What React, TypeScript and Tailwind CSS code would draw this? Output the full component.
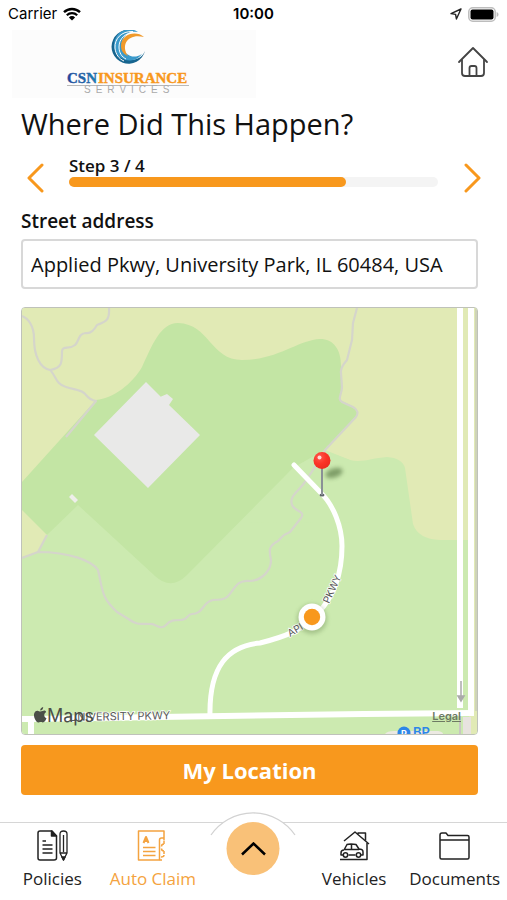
import React, { useState } from 'react';

const ORANGE = '#f8981d';

const StatusBar: React.FC = () => (
  <div className="grid grid-cols-3 items-center h-7 px-2 text-black font-['Inter','Liberation_Sans',sans-serif]">
    <div className="flex items-center gap-1.5 text-[15px]">
      <span>Carrier</span>
      <svg viewBox="0 0 18 14" className="w-[18px] h-3.5" aria-hidden="true">
        <path d="M1 5.2a11.5 11.5 0 0 1 16 0" fill="none" stroke="#000" strokeWidth="2.4" />
        <path d="M3.8 8.2a7.5 7.5 0 0 1 10.4 0" fill="none" stroke="#000" strokeWidth="2.2" />
        <path d="M9 13.6 5.9 10.4a4.4 4.4 0 0 1 6.2 0z" />
      </svg>
    </div>
    <span className="text-center text-[15px] font-semibold">10:00</span>
    <div className="flex items-center justify-end gap-1.5">
      <svg viewBox="0 0 12 12" className="w-3 h-3" aria-hidden="true">
        <path d="M11 1 1 5.6l4.6.8L6.4 11z" fill="none" stroke="#222" strokeWidth="1.4" strokeLinejoin="round" />
      </svg>
      <svg viewBox="0 0 31 15" className="w-[31px] h-[15px]" aria-hidden="true">
        <rect x="0.8" y="0.8" width="26.4" height="13.4" rx="4" fill="#fff" stroke="#bdbdbd" strokeWidth="1.5" />
        <rect x="2.5" y="2.5" width="23" height="10" rx="2" />
        <path d="M28.6 5v5c1.2-.4 1.9-1.4 1.9-2.5s-.7-2.1-1.9-2.5z" fill="#bdbdbd" />
      </svg>
    </div>
  </div>
);

const Logo: React.FC = () => (
  <svg viewBox="0 0 244 68" className="w-[244px] h-[68px] bg-[#fcfcfc]" role="img" aria-label="CSN Insurance Services">
    <defs>
      <linearGradient id="csn" x1="0" x2="1">
        <stop offset="0" stopColor="#26409a" />
        <stop offset="1" stopColor="#1687b5" />
      </linearGradient>
    </defs>
    <path d="M125 2A17 17 0 1 0 133 21A14.500 14.500 0 1 1 125 2Z" fill="#17658f" />
    <path d="M126 2A15.500 15.500 0 1 0 130 24A12.500 12.500 0 1 1 126 2Z" fill="#3a9acb" />
    <path d="M121 1.500C109 1 102.500 9 103 18C103.500 24 107 29 112 31" fill="none" stroke="#fcfcfc" strokeWidth="1" />
    <path d="M124 2.500C113 2 107 9 107 17C107 23 110 27 114 29" fill="none" stroke="#fcfcfc" strokeWidth="1" />
    <path d="M132 7C124 0 109 4 109 16C109 21 112 24.500 116 26C108 14 117 3 132 7Z" fill="#f09a2c" />
    <g fontFamily="'Liberation Serif', serif" fontWeight="700" fontSize="15">
      <text x="55" y="53" fill="url(#csn)" stroke="#2360a5" strokeWidth="0.4">CSN</text>
      <text x="86" y="53" fill={ORANGE} stroke={ORANGE} strokeWidth="0.4">INSURANCE</text>
    </g>
    <path d="M55 55.500h122" stroke="#b9b9b9" />
    <text x="72" y="63" fontFamily="'Liberation Sans', sans-serif" fontSize="10" letterSpacing="5" fill="#aaa">SERVICES</text>
  </svg>
);

const MapView: React.FC = () => (
  <svg viewBox="0 0 455 426" className="block w-full h-auto" role="img" aria-label="Map of Applied Pkwy">
    <defs>
      <filter id="soft" x="-50%" y="-50%" width="200%" height="200%">
        <feGaussianBlur stdDeviation="2.2" />
      </filter>
      <radialGradient id="pinHead" cx="0.35" cy="0.3" r="0.8">
        <stop offset="0" stopColor="#ff5a4e" />
        <stop offset="0.5" stopColor="#fb3427" />
        <stop offset="1" stopColor="#e92a20" />
      </radialGradient>
    </defs>

    {/* Land */}
    <rect width="455" height="426" fill="#cceab0" />
    <path
      d="M0 0H455V426H447V232H418Q396 231 391 216L383 160Q380 150 365 149C350 150 340 155 328 152L306 144L240 120L60 185L25 227L16 244L0 249Z"
      fill="#e1eab5"
    />
    <path
      d="M0 174L74 92C92 90 110 76 120 59C130 38 138 15 156 15C188 16 188 52 220 52C256 52 276 32 298 31C312 31 320 42 319 62L320 79L318 92L332 99L336 106L303 142L271 160L165 267Q149 283 133 268L56 197L25 227L0 202Z"
      fill="#c3e5a4"
    />
    <path d="M303 142L328 152L330 215L220 214L271 160Z" fill="#cceab0" />
    <path d="M124 74L142 92 138 89 145 86 151 91 147 97 178 127 126 180 72 127Z" fill="#e9e9e8" />
    <path d="M50 186L56 192 53 195 47 189Z" fill="#eeeeea" />

    {/* Trails */}
    <g fill="none" stroke="#d5d5cb" strokeWidth="2.2" strokeLinejoin="round">
      <path d="M0 8C6 10 12 18 12 30C12 48 18 60 28 62C33 66 34 77 44 79C52 82 60 81 64 87Q68 92 74 93L44 129" />
      <path d="M87 0C88 14 82 14 75 17Q70 26 64 25C56 25 57 34 53 37C47 42 41 37 40 43C40 55 40 60 28 62" />
      <path d="M335 0L331 15 330 32 325 52Q318 60 319 65L320 79C320 86 315 91 320 94L331 99Q338 103 334 109L303 142 291 162 283 174C276 184 267 188 270 197C273 204 284 203 279 210L268 224C260 227 260 229 256 233C246 238 247 243 249 252C249 262 241 272 228 273C214 271 212 283 205 289C199 294 194 290 188 293C181 296 180 306 170 306C165 306 166 312 159 312C152 312 148 312 144 317C138 323 134 315 128 316C120 315 116 318 108 312L95 304C79 289 81 283 76 262C70 253 48 244 16 244L0 250" />
      <path d="M16 244L25 227" />
    </g>
    <path d="M454 0V403" stroke="#cfd3b8" strokeWidth="2" />

    {/* Roads */}
    <g fill="none" stroke="#fff" strokeWidth="6">
      <path d="M438 0V400" />
      <path d="M449 0V408" />
      <path d="M0 411L8 411Q230 407 452 405" />
      <path d="M9 411V426" />
      <path d="M188 408C187 358 206 338 238 335C262 329 282 322 296 305C314 286 320 262 320 238C320 220 312 197 298 184L272 157" strokeWidth="5" strokeLinecap="round" />
    </g>
    <path d="M438 408V426" stroke="#c8c5c2" strokeWidth="2" />
    <path d="M441 409H449V426H441Z" fill="#e8e3df" />
    <path d="M439 373V391M436 388L439 393 442 388Z" fill="#aaa" stroke="#aaa" strokeWidth="1.5" />

    {/* Road names */}
    <g fontFamily="Inter, 'Liberation Sans', sans-serif" fill="#595959" fontSize="10" stroke="#fff" strokeWidth="1.5" paintOrder="stroke">
      <text x="47" y="413" fontSize="11" transform="rotate(-1 47 413)">UNIVERSITY PKWY</text>
      <text x="268" y="329" transform="rotate(-30 268 329)">API</text>
      <text x="307" y="296" transform="rotate(-65 307 296)">PKWY</text>
    </g>

    {/* Gas station */}
    <path d="M363 426Q365 423 372 423H416Q421 424 421 426Z" fill="#ece9e2" />
    <circle cx="382" cy="425" r="6.5" fill="#2d86e8" />
    <text x="379" y="429" fontFamily="Inter, sans-serif" fontSize="9" fontWeight="700" fill="#fff">P</text>
    <text x="391" y="429" fontFamily="Inter, sans-serif" fontSize="13" fontWeight="600" fill="#2d86e8">BP</text>

    {/* Apple Maps mark */}
    <g fill="#4b4f48" transform="translate(11 399)">
      <path d="M9.5 4C11 3.2 12.3 3.3 13.2 4.9 10.4 6.700 10.700 9.900 13.500 11.300 12.500 14 11.200 15.500 9.700 15.400 8.500 15 7.500 14.800 6.300 15.300 4.500 16.200 2.900 14 1.900 12 .1 8 1 4 4.400 3.700 5.500 3.600 6.400 4.500 7.300 4.500 8 4.500 8.700 4.300 9.500 4Z" />
      <path d="M7.200 3.500C7.100 1.700 8.400.2 10.200 0 10.400 1.900 9 3.500 7.200 3.500Z" />
    </g>
    <text x="25" y="414" fontFamily="Inter, 'Liberation Sans', sans-serif" fontSize="18" fill="#4b4f48">Maps</text>

    {/* Current location */}
    <circle cx="290" cy="311" r="15" fill="#5d7a45" opacity="0.35" filter="url(#soft)" />
    <circle cx="290" cy="309" r="13.5" fill="#fff" />
    <circle cx="290" cy="309" r="8.2" fill={ORANGE} />

    {/* Dropped pin */}
    <ellipse cx="312" cy="165" rx="9" ry="4.5" fill="#4b6b38" opacity="0.6" filter="url(#soft)" transform="rotate(-18 312 165)" />
    <ellipse cx="300" cy="187" rx="2.5" ry="1.5" fill="#60666b" />
    <path d="M300 160V187" stroke="#8a9096" strokeWidth="2" />
    <circle cx="300" cy="152.5" r="8.5" fill="url(#pinHead)" />
    <circle cx="297.5" cy="149.5" r="2" fill="#ffd9d5" />
  </svg>
);

const PoliciesIcon = () => (
  <>
    <path d="M15 1H3Q1 1 1 3V28Q1 30 3 30H17Q19.500 30 19.500 28V6Z" />
    <path d="M14.500 1V6H19.500Z" fill="currentColor" />
    <path d="M5.500 11H9M5.500 15H15.500M5.500 19H15.500M5.500 23H15.500" />
    <path d="M23 23V4Q23 1 26.500 1T30 4V23L26.500 30ZM23 23H30M26.500 5V22" strokeWidth="1.3" />
    <path d="M25 27H28L26.500 30Z" fill="currentColor" />
  </>
);

const ClaimIcon = () => (
  <>
    <path d="M27 8V1H1.500V30H22.500V10Q22.500 8 24.500 8H27V10.500" />
    <path d="M27 14Q24.500 14 24.500 16.500M27 14V11M27 21Q24.500 21 24.500 18.500M27 21V24M24 27Q27 27 27 25M22.500 30H25" />
    <path d="M6.500 13L9 7 11.500 13M7.500 11H10.500" strokeWidth="2" />
    <path d="M6 17.500H18.500M6 21.500H18.500M6 25.500H18.500" />
  </>
);

const VehiclesIcon = () => (
  <>
    <path d="M5 11L16 2 30 14" />
    <path d="M19 4V3H26.500V10.500M28 13V29.500H1" />
    <path d="M5 20L8 14.500Q9 14 12 14T17 14.500L20 19Q24 19 24 22V25H22M5 20Q2 20 2 23V25H4M9.500 25H16.500M5 19.500H20M12.500 14V19" />
    <circle cx="6.500" cy="25" r="2.200" />
    <circle cx="19.500" cy="25" r="2.200" />
  </>
);

const DocumentsIcon = () => (
  <path d="M1 10V5Q1 3 3 3H7L9 5.500H28.500Q30 5.500 30 7V27.500Q30 29 28.500 29H2.500Q1 29 1 27.500V10H30" />
);

interface TabProps {
  label: string;
  active?: boolean;
  children: React.ReactNode;
}

const Tab: React.FC<TabProps> = ({ label, active, children }) => (
  <a href="#" className={`flex flex-col items-center gap-1.5 pt-[7px] ${active ? 'text-[#f4a340]' : 'text-[#222]'}`}>
    <svg viewBox="0 0 31 31" className="w-[31px] h-[31px]" fill="none" stroke="currentColor" strokeWidth="1.5" strokeLinejoin="round" aria-hidden="true">
      {children}
    </svg>
    <span className="text-[17px] leading-6 whitespace-nowrap">{label}</span>
  </a>
);

const App: React.FC = () => {
  const [address, setAddress] = useState('Applied Pkwy, University Park, IL 60484, USA');

  return (
    <div className="min-h-screen flex flex-col bg-white text-[#111] font-['Open_Sans','Noto_Sans',sans-serif]">
      <StatusBar />

      <header className="flex items-center justify-between pt-0.5 pl-3 pr-[18px]">
        <Logo />
        <button type="button" aria-label="Home" className="mb-1">
          <svg viewBox="0 0 32 32" className="w-8 h-8" fill="none" stroke="#444" strokeWidth="1.8" strokeLinejoin="round" strokeLinecap="round">
            <path d="M2 16L16 2 30 16" />
            <path d="M5 14V27Q5 30 8 30H24Q27 30 27 27V14" />
            <path d="M12.500 30V22Q12.500 20 14.500 20H17.500Q19.500 20 19.500 22V30" />
          </svg>
        </button>
      </header>

      <main className="flex-grow pl-[21px] pr-[29px] pt-1.5">
        <h1 className="text-[29px] leading-10">Where Did This Happen?</h1>

        {/* Step progress */}
        <div className="flex items-end mt-[11px] -mr-1 pl-1">
          <button type="button" aria-label="Previous step">
            <svg viewBox="0 0 20 30" className="w-5 h-[30px]" fill="none" stroke={ORANGE} strokeWidth="3" strokeLinecap="round" strokeLinejoin="round">
              <path d="M17 2L4 15 17 28" />
            </svg>
          </button>
          <div className="flex-grow mx-6 pb-1.5">
            <div className="text-[17px] leading-[22px] font-semibold">Step 3 / 4</div>
            <div className="h-2.5 rounded-full bg-[#f4f4f4]">
              <div className="h-2.5 w-3/4 rounded-full bg-[#f8981d]" />
            </div>
          </div>
          <button type="button" aria-label="Next step">
            <svg viewBox="0 0 20 30" className="w-5 h-[30px]" fill="none" stroke={ORANGE} strokeWidth="3" strokeLinecap="round" strokeLinejoin="round">
              <path d="M4 2L17 15 4 28" />
            </svg>
          </button>
        </div>

        <label htmlFor="address" className="block mt-3.5 text-[19px] leading-7 font-semibold">
          Street address
        </label>
        <input
          id="address"
          type="text"
          value={address}
          onChange={(e) => setAddress(e.target.value)}
          className="block mt-1 w-full h-[50px] px-2 border-2 border-[#d8d8d8] rounded-sm text-[20px] outline-none"
        />

        <div className="relative mt-[18px] border border-[#bfc2ba] rounded overflow-hidden">
          <MapView />
          <a href="#" className="absolute right-4 bottom-2.5 text-[11px] leading-4 text-[#6d7a63] font-semibold underline font-['Inter',sans-serif]">
            Legal
          </a>
        </div>

        <button type="button" className="mt-2.5 w-full h-[50px] rounded bg-[#f8981d] text-white text-[22px] font-bold">
          My Location
        </button>
      </main>

      {/* Bottom tabs */}
      <nav className="relative mt-6 h-[78px] px-0.5 border-t border-[#d6d6d6] grid grid-cols-5">
        <Tab label="Policies"><PoliciesIcon /></Tab>
        <Tab label="Auto Claim" active><ClaimIcon /></Tab>
        <div className="relative">
          <svg viewBox="0 0 92 30" className="absolute left-1/2 -translate-x-1/2 -top-3.5 w-[92px] h-[30px]" aria-hidden="true">
            <path d="M4 26A51 51 0 0 1 88 26V30H4Z" fill="#fff" />
            <path d="M4 26A51 51 0 0 1 88 26" fill="none" stroke="#d2d2d2" strokeWidth="1.3" />
          </svg>
          <button type="button" aria-label="Open menu" className="absolute left-1/2 -translate-x-1/2 -top-px w-[53px] h-[53px] rounded-full bg-[#f9c178] flex items-center justify-center">
            <svg viewBox="0 0 26 14" className="w-[26px] h-3.5" fill="none" stroke="#000" strokeWidth="2.5">
              <path d="M1.500 12.500L13 1.500 24.500 12.500" />
            </svg>
          </button>
        </div>
        <Tab label="Vehicles"><VehiclesIcon /></Tab>
        <Tab label="Documents"><DocumentsIcon /></Tab>
      </nav>
    </div>
  );
};

export default App;
